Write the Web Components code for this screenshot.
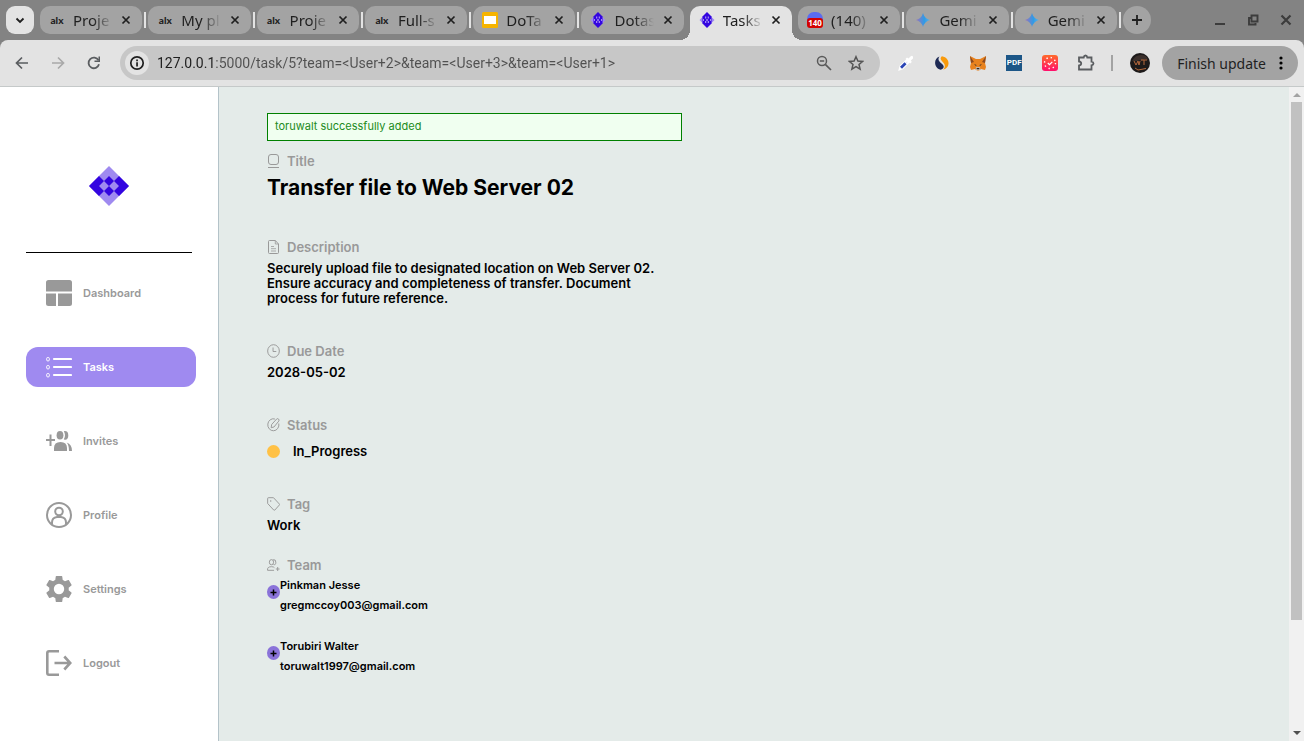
<!DOCTYPE html>
<html lang="en">
<head>
<meta charset="utf-8">
<title>Tasks</title>
<style>
  html, body { height: 100%; }
  body { margin: 0; font-family: Inter, "Liberation Sans", sans-serif; color: #000; overflow: hidden; }
</style>
</head>
<body>
<app-window>
  <tab-strip slot="tabs">
    <browser-tab icon="alx">Proje</browser-tab>
    <browser-tab icon="alx">My pl</browser-tab>
    <browser-tab icon="alx">Proje</browser-tab>
    <browser-tab icon="alx">Full-s</browser-tab>
    <browser-tab icon="slides">DoTa</browser-tab>
    <browser-tab icon="diamond" nosep>Dotas</browser-tab>
    <browser-tab icon="diamond" active nosep>Tasks</browser-tab>
    <browser-tab icon="badge">(140)</browser-tab>
    <browser-tab icon="gemini">Gemi</browser-tab>
    <browser-tab icon="gemini">Gemi</browser-tab>
  </tab-strip>
  <tool-bar slot="toolbar"></tool-bar>
  <side-nav slot="nav">
    <nav-item icon="dashboard">Dashboard</nav-item>
    <nav-item icon="tasks" active>Tasks</nav-item>
    <nav-item icon="invites">Invites</nav-item>
    <nav-item icon="profile">Profile</nav-item>
    <nav-item icon="settings">Settings</nav-item>
    <nav-item icon="logout">Logout</nav-item>
  </side-nav>
  <task-detail slot="page">
    <flash-message>toruwalt successfully added</flash-message>
    <task-field icon="title" label="Title" size="large">Transfer file to Web Server 02</task-field>
    <task-field icon="doc" label="Description" size="text">Securely upload file to designated location on Web Server 02. Ensure accuracy and completeness of transfer. Document process for future reference.</task-field>
    <task-field icon="clock" label="Due Date">2028-05-02</task-field>
    <task-field icon="edit" label="Status" size="status">In_Progress</task-field>
    <task-field icon="tag" label="Tag" size="tight">Work</task-field>
    <task-field icon="team" label="Team" size="list">
      <team-member name="Pinkman Jesse" email="gregmccoy003@gmail.com"></team-member>
      <team-member name="Torubiri Walter" email="toruwalt1997@gmail.com"></team-member>
    </task-field>
  </task-detail>
  <scroll-track slot="scroll"></scroll-track>
</app-window>

<script>
const diamond = '<path d="M20 0 40 20 20 40 0 20z" fill="#9f8af0"/><path d="M0 20 10 10 15 15 10 20 15 25 10 30zM40 20 30 10 25 15 30 20 25 25 30 30zM20 10l5 5-5 5-5-5zM20 20l5 5-5 5-5-5z" fill="#3305e0"/>';
const ICONS = {
  logo: ['0 0 40 40', diamond],
  diamond: ['0 0 16 16', '<path d="M0.5 8 4 4.5v7zM15.500 8 12 4.500v7z" fill="#9f8af0"/><path d="M8 0 12.500 4.500v7L8 16 3.500 11.500v-7z" fill="#3305e0"/><path d="M6 4.500h1.300v2H6zM8.700 4.500H10v2H8.700zM6 9h1.300v2H6zM8.700 9H10v2H8.700zM4 7h1v2H4zM11 7h1v2h-1zM7 7.300h2v1.400H7z" fill="#9f8af0"/>'],
  slides: ['0 0 16 16', '<rect width="16" height="16" rx="1.500" fill="#f6b400"/><rect x="2" y="4" width="12" height="8" fill="#fff"/>'],
  gemini: ['0 0 16 16', '<defs><linearGradient id="g"><stop offset=".1" stop-color="#8b78c0"/><stop offset=".6" stop-color="#2f9be6"/><stop offset="1" stop-color="#5cb4e8"/></linearGradient></defs><path d="M8 1Q9.500 6.500 15 8 9.500 9.500 8 15 6.500 9.500 1 8 6.500 6.500 8 1z" fill="url(#g)"/>'],
  close: ['0 0 10 10', '<path d="M1.500 1.500l7 7M8.500 1.500l-7 7" stroke="#1f1f1f" stroke-width="1.700"/>'],
  winclose: ['0 0 12 12', '<path d="M1.500 1.500l9 9M10.500 1.500l-9 9" stroke="#3c3c3c" stroke-width="2.200"/>'],
  winmin: ['0 0 12 12', '<path d="M1 10h10" stroke="#3c3c3c" stroke-width="2"/>'],
  winmax: ['0 0 12 12', '<path d="M4.500 1.500h6v6h-6zM4 4H2v6.500h6.500V9" fill="none" stroke="#3c3c3c" stroke-width="1.900"/>'],
  chevron: ['0 0 12 12', '<path d="M2.500 4.500 6 8l3.500-3.500" fill="none" stroke="#1f1f1f" stroke-width="1.800"/>'],
  plus: ['0 0 12 12', '<path d="M6 1v10M1 6h10" stroke="#1f1f1f" stroke-width="1.800"/>'],
  add: ['0 0 7 7', '<path d="M3.500 .5v6M.5 3.500h6" stroke="#000" stroke-width="1.500"/>'],
  back: ['0 0 16 16', '<path d="M14 8H3M8 2.500 2.500 8 8 13.500" fill="none" stroke="#5a5d60" stroke-width="1.700"/>'],
  forward: ['0 0 16 16', '<path d="M2 8h11M8 2.500 13.500 8 8 13.500" fill="none" stroke="#a9a9a9" stroke-width="1.700"/>'],
  reload: ['0 0 16 16', '<path d="M13 9.300A5.300 5.300 0 1 1 12.500 5.300" fill="none" stroke="#5a5d60" stroke-width="1.800"/><path d="M14 1.500V7H8.500V5.500h4v-4z" fill="#5a5d60"/>'],
  info: ['0 0 16 16', '<circle cx="8" cy="8" r="6.200" fill="none" stroke="#1f1f1f" stroke-width="1.700"/><path d="M7.200 7.300h1.700v4.200H7.200zM7.200 4.500h1.700v1.700H7.200z" fill="#1f1f1f"/>'],
  zoomout: ['0 0 16 16', '<circle cx="6" cy="6" r="4.500" fill="none" stroke="#5a5a5a" stroke-width="1.500"/><path d="M3.800 6h4.400M9.300 9.300 15 15" stroke="#5a5a5a" stroke-width="1.700"/>'],
  star: ['0 0 16 16', '<path d="M8 1.700 9.900 6l4.700.4-3.600 3.100 1.100 4.600L8 11.600l-4.100 2.500L5 9.500 1.400 6.400 6.100 6z" fill="none" stroke="#555" stroke-width="1.500"/>'],
  dropper: ['0 0 16 16', '<path d="M1.500 14.500 2.500 11 9 5l2 2-6.500 6.500z" fill="#dfe4f8" stroke="#fff" stroke-width="1.800"/><path d="M3 12.800 7.500 8.300" stroke="#2b45b5" stroke-width="2.800"/><path d="M7.500 4 9 2.500l1.500 1L12.500 1.500q2-1.500 2.500.5v1.500l-2.200 2 1 1.500L12.300 8.500z" fill="#fff"/>'],
  swirl: ['0 0 16 16', '<path d="M5.500 1.500C-1 4 0 13 6.500 14.700c4-.7 4-4.200 1.300-6C4.500 6.500 3.500 4 5.500 1.500z" fill="#1e2a55"/><path d="M8 1.300C4.500 4 8.500 6.500 10 8.500c1.500 2 .7 4.500-.8 6C16 13.500 17 3 8 1.300z" fill="#f89a0c"/>'],
  fox: ['0 0 16 16', '<path d="M0 1 6 4h4l6-3-1 7 1 4-1 3-4-1-2 1.500H7L5 14l-4 1-1-3 1-4z" fill="#e8821e"/><path d="M0 1l4 6-3 1zM16 1l-4 6 3 1z" fill="#8c4a20"/><path d="M6 12h4l.5 3h-5z" fill="#c9b6a4"/><path d="M4 9l2.500 1L6 11zM12 9l-2.500 1 .5 1zM6.500 13h3l-.5 1.300H7z" fill="#2b2b2b"/>'],
  dial: ['0 0 16 16', '<defs><linearGradient id="d" x2="0" y2="1"><stop stop-color="#ff6a2b"/><stop offset="1" stop-color="#ff0f6c"/></linearGradient></defs><rect width="16" height="16" rx="3" fill="url(#d)"/><circle cx="8" cy="8" r="5.500" fill="none" stroke="#fff" stroke-width="1.400" stroke-dasharray="1.300 3.020"/><path d="M5.800 8l1.700 1.700 2.800-2.800" fill="none" stroke="#fff" stroke-width="1.200"/>'],
  puzzle: ['0 0 18 18', '<path d="M2 3.500h4.700q.3-2 1.800-2t1.800 2h4.200v4.200q2 .3 2 1.800t-2 1.800v4.200H2v-4q2.200-.3 2.200-2T2 7.500z" fill="none" stroke="#5a5d60" stroke-width="1.800"/>'],
  avatar: ['0 0 20 20', '<circle cx="10" cy="10" r="10" fill="#1d1a1a"/><path d="M2 8q3-6 9-6t7 5l-3-1-4 2-1-1-3 1z" fill="#3b302c"/><path d="M4 8l2 4 2-4 1 4 1-4M11 7h6M14 7v5M5 15l3 2 8-1.500" fill="none" stroke="#b5683c" stroke-width="1"/>'],
  dots: ['0 0 4 16', '<circle cx="2" cy="3" r="1.600"/><circle cx="2" cy="8" r="1.600"/><circle cx="2" cy="13" r="1.600"/>'],
  dashboard: ['0 0 26 26', '<path d="M2.500 0h21Q26 0 26 2.500V11.500H0v-9Q0 0 2.500 0zM0 13.500h10V26H2.500Q0 26 0 23.500zM12 13.500h14v10q0 2.500-2.500 2.500H12z" fill="currentColor"/>'],
  tasks: ['0 0 26 26', '<g fill="none" stroke="currentColor"><path d="M8 5h17M8 13h17M8 21h17" stroke-width="2.200" stroke-linecap="round"/><rect x=".7" y="3.500" width="2.600" height="3.400" rx="1"/><rect x=".7" y="11.500" width="2.600" height="3.400" rx="1"/><rect x=".7" y="19.500" width="2.600" height="3.400" rx="1"/></g>'],
  invites: ['0 0 26 26', '<path d="M0 11h3.500V6.500h2V11H9v2H5.500v5h-2v-5H0z" fill="currentColor"/><ellipse cx="14" cy="7.300" rx="3.400" ry="4.300" fill="currentColor"/><path d="M8 23v-3q0-6 6.500-6t6.500 6v3zM17.800 3.200q4.500-.7 4.500 4.300t-4.500 4q2.500-4.200 0-8.300zM20.700 14.400Q26 16 26 23h-3q0-6-2.300-8.600z" fill="currentColor"/>'],
  profile: ['0 0 26 26', '<g fill="none" stroke="currentColor" stroke-width="2"><circle cx="13" cy="13" r="12"/><circle cx="13" cy="9.500" r="3.800"/><path d="M6 22.500v-2q0-5 5-5.500h4q5 .5 5 5.500v2"/></g>'],
  settings: ['2 2 20 20', '<path d="M19.430 12.980c.040-.320.070-.640.070-.980s-.030-.660-.070-.980l2.110-1.650c.190-.150.240-.420.120-.640l-2-3.460c-.120-.220-.390-.300-.610-.220l-2.490 1c-.520-.400-1.080-.730-1.690-.980l-.380-2.650A.488.488 0 0 0 14 2h-4c-.250 0-.460.180-.490.420l-.380 2.650c-.610.250-1.170.590-1.690.980l-2.490-1c-.230-.090-.490 0-.610.220l-2 3.460c-.130.220-.070.490.120.640l2.110 1.650c-.040.320-.070.650-.070.980s.030.660.070.980l-2.110 1.650c-.190.150-.240.420-.120.640l2 3.460c.120.220.390.300.610.220l2.490-1c.520.400 1.080.730 1.690.980l.380 2.650c.030.240.240.420.490.420h4c.250 0 .460-.180.490-.420l.380-2.650c.610-.250 1.170-.590 1.690-.980l2.490 1c.230.090.490 0 .610-.220l2-3.460c.120-.220.070-.490-.120-.640zM12 16a4 4 0 1 1 0-8 4 4 0 0 1 0 8z" fill="currentColor"/>'],
  logout: ['0 0 26 26', '<path d="M13 1.300H3Q1.300 1.300 1.300 3v20q0 1.700 1.700 1.700h10" fill="none" stroke="currentColor" stroke-width="2.600"/><path d="M8.500 13H24M18.300 6.500l6 6.500-6 6.500" fill="none" stroke="currentColor" stroke-width="2.600"/>'],
  title: ['0 0 13 14', '<g fill="none" stroke="currentColor"><rect x="1.500" y=".5" width="10" height="10" rx="2.500"/><path d="M1 13.500h11"/></g>'],
  doc: ['0 0 13 14', '<g fill="none" stroke="currentColor"><path d="M1.500 1.500q0-1 1-1h5.800l3.200 3.500v8.500q0 1-1 1h-8q-1 0-1-1z"/><path d="M8.300.5V4h3.200M4 6.500h3M4 8.700h5M4 11h5" stroke-width=".8"/></g>'],
  clock: ['0 0 14 14', '<g fill="none" stroke="currentColor"><circle cx="7" cy="7" r="6.300"/><path d="M6.500 3.500v4H10"/></g>'],
  edit: ['0 0 14 14', '<g fill="none" stroke="currentColor"><path d="M8.500 1A6 6 0 1 0 12.700 5.500"/><path d="M4.500 9.700 5 6.500 10.500.9q1-.7 2 .2.900 1 .2 2L7.500 9z"/></g>'],
  tag: ['0 0 14 14', '<g fill="none" stroke="currentColor"><path d="M.7 1.500q0-.8.8-.8H7L13.300 7q.5.500 0 1L8.500 13q-.7.500-1.300 0L.7 6.500z"/></g><circle cx="4" cy="4" r=".8" fill="currentColor"/>'],
  team: ['0 0 14 14', '<g fill="none" stroke="currentColor"><ellipse cx="4.800" cy="4.200" rx="2.300" ry="2.600"/><path d="M6.500 1.800q3-.8 3 2.400T7 6.500M.6 12.300Q0 8.700 4.800 8.700q2.500 0 3.200 1M.6 12.300h7M11.500 9v4M9.500 11h4"/></g>']
};

function define(name, html, setup) {
  const template = document.createElement('template');
  template.innerHTML = html;
  customElements.define(name, class extends HTMLElement {
    connectedCallback() {
      if (this.shadowRoot) return;
      const root = this.attachShadow({ mode: 'open' });
      root.append(template.content.cloneNode(true));
      if (setup) setup(this, root);
    }
  });
}

/* Sized vector icon; --w and --h set its box */
define('ui-icon', `
  <style>
    :host { display: block; flex: none; width: var(--w, 16px); height: var(--h, var(--w, 16px)); }
    svg { display: block; width: 100%; height: 100%; }
  </style>`, (el, root) => {
  const [box, body] = ICONS[el.getAttribute('name')];
  root.innerHTML += `<svg viewBox="${box}" preserveAspectRatio="none" aria-hidden="true">${body}</svg>`;
});

define('app-window', `
  <style>
    :host { display: flex; flex-direction: column; height: 100vh; background: #838383; }
    .body { flex: 1; min-height: 0; display: flex; background: #e4ebe9; border-top: 1px solid #c5c9c9; }
    main { flex: 1; min-width: 0; overflow: hidden; }
  </style>
  <slot name="tabs"></slot>
  <slot name="toolbar"></slot>
  <div class="body"><slot name="nav"></slot><main><slot name="page"></slot></main><slot name="scroll"></slot></div>`);

define('tab-strip', `
  <style>
    :host { display: flex; align-items: center; height: 40px; padding: 0 12px 0 6px; background: #838383; flex: none; }
    button { border: 0; padding: 0; display: grid; place-items: center; background: none; flex: none; }
    .menu { width: 28px; height: 28px; border-radius: 9px; background: #e3e3e3; margin-right: 6px; }
    .tabs { flex: 1; min-width: 0; display: flex; gap: 6px; }
    .new { width: 28px; height: 28px; border-radius: 50%; background: #a3a3a3; margin-left: 6px; }
    .controls { display: flex; gap: 21px; margin-left: 63px; }
    ui-icon { --w: 12px; }
  </style>
  <button class="menu" aria-label="Search tabs"><ui-icon name="chevron"></ui-icon></button>
  <div class="tabs"><slot></slot></div>
  <button class="new" aria-label="New tab"><ui-icon name="plus"></ui-icon></button>
  <div class="controls">
    <button aria-label="Minimize"><ui-icon name="winmin"></ui-icon></button>
    <button aria-label="Restore"><ui-icon name="winmax"></ui-icon></button>
    <button aria-label="Close"><ui-icon name="winclose"></ui-icon></button>
  </div>`);

define('browser-tab', `
  <style>
    :host { position: relative; box-sizing: border-box; flex: 1 1 0; min-width: 0; height: 28px; display: flex; align-items: center;
      padding: 0 11px 0 9px; border-radius: 10px; background: #a3a3a3; font: 15px "Noto Sans", sans-serif; color: #1f1f1f; }
    :host::after { content: ""; position: absolute; right: -4px; top: 6px; width: 2px; height: 16px; background: #e3e3e3; }
    :host([nosep])::after { display: none; }
    :host([active]) { background: #e3e3e3; height: 34px; margin-bottom: -6px; padding-bottom: 6px; border-radius: 10px 10px 0 0; }
    :host([active])::before { content: ""; position: absolute; left: -10px; right: -10px; bottom: 0; height: 10px;
      background: radial-gradient(circle at 0 0, transparent 10px, #e3e3e3 10px) left / 10px 10px no-repeat,
        radial-gradient(circle at 100% 0, transparent 10px, #e3e3e3 10px) right / 10px 10px no-repeat; }
    .fav { flex: none; width: 16px; height: 16px; display: grid; place-items: center; }
    .alx { font: 900 10px/16px Lato, sans-serif; }
    .badge { width: 16px; height: 16px; border-radius: 7px; display: flex; align-items: flex-end; background: #5a6cf0; }
    .badge b { flex: 1; height: 10px; border-radius: 3px; background: #d40000; color: #fff; font: bold 8px/10px "Noto Sans", sans-serif; text-align: center; }
    .title { flex: 1; min-width: 0; margin-left: 8px; overflow: hidden; white-space: nowrap; line-height: 20px;
      mask-image: linear-gradient(90deg, #000 20px, transparent 40px); }
    button { border: 0; padding: 0; background: none; flex: none; margin-left: 9px; }
    .close { --w: 10px; }
  </style>
  <span class="fav"></span><span class="title"><slot></slot></span>
  <button aria-label="Close tab"><ui-icon class="close" name="close"></ui-icon></button>`, (el, root) => {
  const icon = el.getAttribute('icon');
  root.querySelector('.fav').innerHTML =
    icon === 'alx' ? '<span class="alx">alx</span>' :
    icon === 'badge' ? '<span class="badge"><b>140</b></span>' : `<ui-icon name="${icon}"></ui-icon>`;
});

define('tool-bar', `
  <style>
    :host { box-sizing: border-box; flex: none; height: 46px; display: flex; align-items: center; padding: 0 6px 0 14px;
      border-radius: 8px 8px 0 0; background: #e3e3e3; font-family: "Noto Sans", sans-serif; color: #1f1f1f; }
    button { border: 0; padding: 0; background: none; flex: none; font: inherit; color: inherit; }
    .nav { display: flex; gap: 20px; margin-right: 18px; }
    .omni { box-sizing: border-box; flex: 1; min-width: 0; height: 34px; border-radius: 17px; background: #c7c7c7; display: flex; align-items: center; padding: 0 16px 0 5px; gap: 16px; }
    .info { width: 24px; height: 24px; border-radius: 50%; background: #e3e3e3; display: grid; place-items: center; margin-right: -8px; }
    input { flex: 1; min-width: 0; border: 0; outline: 0; padding: 0; height: 24px; font: 14px Roboto, "Noto Sans", sans-serif;
      color: transparent; background: linear-gradient(90deg, #1f1f1f 56px, #505050 56px); background-clip: text; -webkit-background-clip: text; }
    .ext { display: flex; align-items: center; gap: 20px; margin: 0 12px 0 18px; }
    .pdf { width: 16px; height: 16px; background: #1c5687; color: #fff; font: bold 8px/16px Roboto, sans-serif; text-align: center; }
    .bar { width: 2px; height: 16px; background: #a3a3a3; margin: 0 -3px; }
    .puzzle { --w: 18px; margin: 0 -1px; }
    .avatar { --w: 20px; }
    .update { height: 34px; border-radius: 17px; background: #a3a3a3; display: flex; align-items: center; gap: 13px; padding: 0 15px; font-size: 14px; }
    .dots { --w: 4px; --h: 16px; }
  </style>
  <div class="nav">
    <button aria-label="Back"><ui-icon name="back"></ui-icon></button>
    <button aria-label="Forward"><ui-icon name="forward"></ui-icon></button>
    <button aria-label="Reload"><ui-icon name="reload"></ui-icon></button>
  </div>
  <div class="omni">
    <button class="info" aria-label="Site information"><ui-icon name="info"></ui-icon></button>
    <input aria-label="Address" value="127.0.0.1:5000/task/5?team=&lt;User+2&gt;&amp;team=&lt;User+3&gt;&amp;team=&lt;User+1&gt;">
    <button aria-label="Zoom"><ui-icon name="zoomout"></ui-icon></button>
    <button aria-label="Bookmark"><ui-icon name="star"></ui-icon></button>
  </div>
  <div class="ext">
    <button aria-label="Color picker"><ui-icon name="dropper"></ui-icon></button>
    <button aria-label="Similar sites"><ui-icon name="swirl"></ui-icon></button>
    <button aria-label="Wallet"><ui-icon name="fox"></ui-icon></button>
    <button class="pdf">PDF</button>
    <button aria-label="Timer"><ui-icon name="dial"></ui-icon></button>
    <button aria-label="Extensions"><ui-icon class="puzzle" name="puzzle"></ui-icon></button>
    <span class="bar"></span>
    <button aria-label="Account"><ui-icon class="avatar" name="avatar"></ui-icon></button>
  </div>
  <button class="update">Finish update <ui-icon class="dots" name="dots"></ui-icon></button>`);

define('side-nav', `
  <style>
    :host { box-sizing: border-box; flex: none; width: 219px; background: #fff; border-right: 1px solid #b4c3c9; padding: 79px 22px 0 26px; }
    .logo { --w: 40px; margin: 0 auto 46px 63px; }
    hr { border: 0; height: 1px; background: #000; margin: 0 4px 20px 0; }
    nav { display: flex; flex-direction: column; gap: 34px; }
  </style>
  <ui-icon class="logo" name="logo"></ui-icon>
  <hr>
  <nav><slot></slot></nav>`);

define('nav-item', `
  <style>
    :host { display: block; }
    a { display: flex; align-items: center; gap: 11px; height: 40px; padding-left: 20px; border-radius: 12px;
      color: #999; text-decoration: none; font-size: 11px; line-height: 14px; font-weight: 600; }
    :host([active]) a { background: #9f8af0; color: #fff; }
    ui-icon { --w: 26px; }
  </style>
  <a href="#"><slot></slot></a>`, (el, root) => {
  const icon = document.createElement('ui-icon');
  icon.setAttribute('name', el.getAttribute('icon'));
  root.querySelector('a').prepend(icon);
});

define('task-detail', `
  <style>:host { display: block; padding: 26px 48px 0; max-width: 415px; }</style>
  <slot></slot>`);

define('flash-message', `
  <style>
    :host { display: block; border: 1px solid #008000; background: #f0fff0; color: #228b22; padding: 5px 7px 7px; margin-bottom: 12px; font-size: 11px; line-height: 14px; }
  </style>
  <slot></slot>`);

define('task-field', `
  <style>
    :host { display: block; margin-bottom: 37px; }
    h2 { display: flex; align-items: center; gap: 7px; margin: 0 0 6px; color: #999; font-size: 13px; line-height: 16px; font-weight: 600; }
    ui-icon { --w: 13px; --h: 14px; }
    .value { font-size: 13px; line-height: 15px; font-weight: 600; max-width: 400px; }
    :host([size=large]) { margin-bottom: 38px; }
    :host([size=large]) .value { font-size: 21px; line-height: 26px; font-weight: 700; }
    :host([size=status]) h2 { margin-bottom: 11px; }
    :host([size=status]) .value { display: flex; align-items: center; gap: 13px; }
    :host([size=status]) .value::before { content: ""; width: 13px; height: 13px; border-radius: 50%; background: #ffc145; }
    :host([size=tight]) { margin-bottom: 24px; }
    :host([size=list]) h2 { margin-bottom: 5px; }
  </style>
  <h2></h2>
  <div class="value"><slot></slot></div>`, (el, root) => {
  root.querySelector('h2').innerHTML = `<ui-icon name="${el.getAttribute('icon')}"></ui-icon>${el.getAttribute('label')}`;
});

define('team-member', `
  <style>
    :host { display: flex; margin-bottom: 27px; font-size: 11px; line-height: 14px; font-weight: 600; }
    button { width: 13px; height: 14px; margin: 7px 0 0; border: 0; padding: 0; border-radius: 50%; background: #8a73d9; display: grid; place-items: center; }
    ui-icon { --w: 7px; }
    p { margin: 0 0 6px; }
    p + p { margin: 0; }
  </style>
  <button aria-label="Add"><ui-icon name="add"></ui-icon></button>
  <div><p class="name"></p><p class="email"></p></div>`, (el, root) => {
  root.querySelector('.name').textContent = el.getAttribute('name');
  root.querySelector('.email').textContent = el.getAttribute('email');
});

define('scroll-track', `
  <style>
    :host { box-sizing: border-box; flex: none; width: 15px; background: #f1f1f1; display: flex; flex-direction: column; align-items: center; padding: 6px 0; }
    i { border: 4px solid transparent; border-top: 0; border-bottom: 4px solid #a3a3a3; }
    .track { flex: 1; width: 11px; margin: 5px 0; }
    .thumb { height: 83%; background: #c1c1c1; }
    .down { border-bottom: 0; border-top: 4px solid #505050; }
  </style>
  <i></i><div class="track"><div class="thumb"></div></div><i class="down"></i>`);
</script>
</body>
</html>
